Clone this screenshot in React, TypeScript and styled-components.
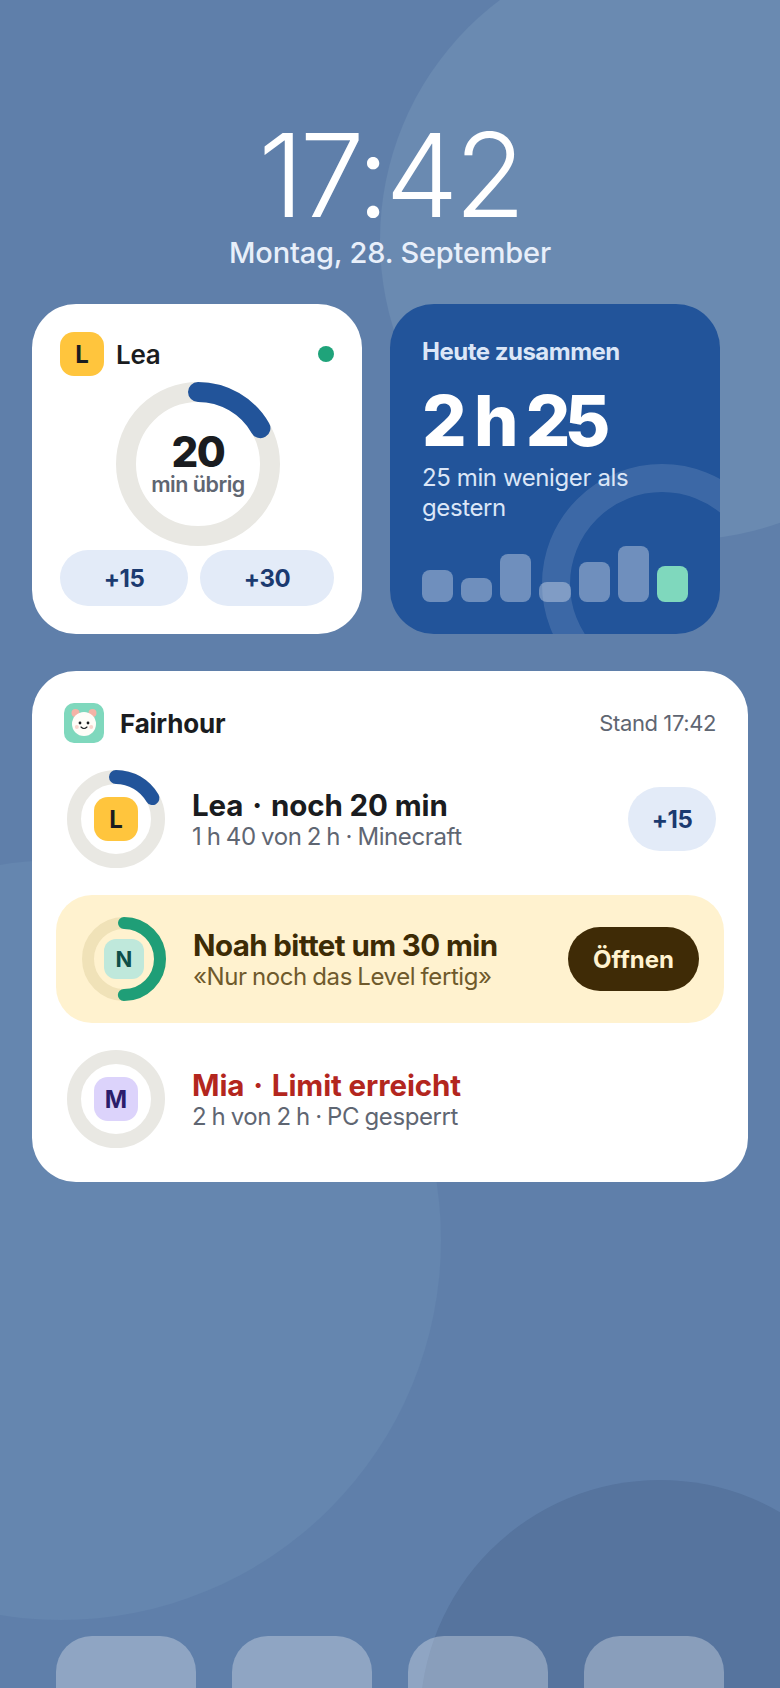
import React from "react";
import styled, { createGlobalStyle } from "styled-components";

const GlobalStyle = createGlobalStyle`
  html, body {
    margin: 0;
    padding: 0;
    background: #5f7faa;
  }
  * {
    box-sizing: border-box;
  }
`;

const Screen = styled.div`
  position: relative;
  width: 780px;
  height: 1688px;
  overflow: hidden;
  background: #5f7faa;
  font-family: Inter, "Liberation Sans", sans-serif;
  color: #1a1c20;
  display: flex;
  flex-direction: column;
`;
const Blob = styled.div<{ $x: number; $y: number; $size: number; $color: string }>`
  position: absolute;
  left: ${(p) => p.$x}px;
  top: ${(p) => p.$y}px;
  width: ${(p) => p.$size}px;
  height: ${(p) => p.$size}px;
  border-radius: 50%;
  background: ${(p) => p.$color};
`;
const Content = styled.div`
  position: relative;
  flex: 1;
  display: flex;
  flex-direction: column;
  padding: 0 32px;
`;
const Clock = styled.div`
  text-align: center;
  margin-top: 117px;
  font-size: 116px;
  line-height: 116px;
  font-weight: 300;
  letter-spacing: -4px;
  color: #fff;
`;
const DateLine = styled.div`
  text-align: center;
  margin-top: 2px;
  font-size: 29px;
  line-height: 36px;
  font-weight: 500;
  letter-spacing: -0.2px;
  color: #e8effa;
`;
const WidgetRow = styled.div`
  display: flex;
  gap: 28px;
  margin-top: 33px;
`;
const Widget = styled.div<{ $dark?: boolean }>`
  position: relative;
  overflow: hidden;
  width: 330px;
  height: 330px;
  border-radius: 44px;
  display: flex;
  flex-direction: column;
  background: ${(p) => (p.$dark ? "#22549a" : "#fff")};
  padding: ${(p) => (p.$dark ? "32px" : "28px")};
`;
const WidgetHead = styled.div`
  display: flex;
  align-items: center;
  gap: 12px;
`;
const Avatar = styled.div<{ $bg: string; $fg: string; $size: number; $radius: number; $font: number }>`
  position: relative;
  flex: none;
  width: ${(p) => p.$size}px;
  height: ${(p) => p.$size}px;
  border-radius: ${(p) => p.$radius}px;
  background: ${(p) => p.$bg};
  color: ${(p) => p.$fg};
  font-size: ${(p) => p.$font}px;
  font-weight: 700;
  display: flex;
  align-items: center;
  justify-content: center;
`;
const HeadName = styled.div`
  flex: 1;
  font-size: 26px;
  font-weight: 600;
  letter-spacing: -0.3px;
`;
const Dot = styled.div`
  width: 16px;
  height: 16px;
  border-radius: 50%;
  background: #1fa37a;
`;
const RingBox = styled.div<{ $size: number }>`
  position: relative;
  flex: none;
  width: ${(p) => p.$size}px;
  height: ${(p) => p.$size}px;
  display: flex;
  align-items: center;
  justify-content: center;
`;
const RingSvg = styled.svg`
  position: absolute;
  inset: 0;
`;
const BigRing = styled(RingBox)`
  margin: 6px 0 4px 56px;
  flex-direction: column;
`;
const RingNumber = styled.div`
  position: relative;
  font-size: 42px;
  line-height: 40px;
  font-weight: 800;
  letter-spacing: -1.5px;
`;
const RingLabel = styled.div`
  position: relative;
  font-size: 21.5px;
  line-height: 24px;
  font-weight: 600;
  letter-spacing: -0.5px;
  color: #5f6672;
`;
const PillRow = styled.div`
  display: flex;
  gap: 12px;
`;
const Pill = styled.div<{ $grow?: number }>`
  flex: ${(p) => p.$grow ?? 1};
  height: 56px;
  border-radius: 28px;
  background: #e3ebf8;
  color: #1b3a70;
  font-size: 24px;
  font-weight: 700;
  letter-spacing: -0.5px;
  display: flex;
  align-items: center;
  justify-content: center;
`;
const Decor = styled.div`
  position: absolute;
  left: 152px;
  top: 160px;
  width: 240px;
  height: 240px;
  border-radius: 50%;
  border: 28px solid rgba(255, 255, 255, 0.12);
`;
const DarkLabel = styled.div`
  position: relative;
  font-size: 24px;
  line-height: 32px;
  font-weight: 700;
  letter-spacing: -0.5px;
  color: #dbe6f7;
`;
const DarkValue = styled.div`
  position: relative;
  margin-top: 15px;
  font-size: 70px;
  line-height: 76px;
  font-weight: 800;
  letter-spacing: -5.5px;
  word-spacing: 3px;
  color: #fff;
`;
const DarkNote = styled.div`
  position: relative;
  margin-top: 4px;
  width: 230px;
  font-size: 24px;
  line-height: 30px;
  letter-spacing: -0.4px;
  color: #dbe6f7;
`;
const Bars = styled.div`
  position: relative;
  margin-top: auto;
  display: flex;
  align-items: flex-end;
  gap: 8px;
`;
const Bar = styled.div<{ $h: number; $accent?: boolean }>`
  flex: 1;
  height: ${(p) => p.$h}px;
  border-radius: 8px;
  background: ${(p) => (p.$accent ? "#7fd8bd" : "rgba(255, 255, 255, 0.35)")};
`;
const Card = styled.div`
  margin-top: 37px;
  background: #fff;
  border-radius: 44px;
  padding: 32px 24px 34px;
  display: flex;
  flex-direction: column;
  gap: 27px;
`;
const CardHead = styled.div`
  display: flex;
  align-items: center;
  padding: 0 8px;
`;
const AppName = styled.div`
  flex: 1;
  margin-left: 16px;
  font-size: 26px;
  font-weight: 700;
  letter-spacing: -0.2px;
`;
const Stamp = styled.div`
  font-size: 22px;
  color: #5f6672;
  letter-spacing: -0.4px;
`;
const Row = styled.div<{ $highlight?: boolean }>`
  display: flex;
  align-items: center;
  ${(p) =>
    p.$highlight
      ? `
    height: 128px;
    padding: 0 25px 0 26px;
    gap: 27px;
    border-radius: 36px;
    background: #fff2cf;
  `
      : `
    padding: 0 8px 0 11px;
    gap: 27px;
  `}
`;
const RowText = styled.div`
  flex: 1;
  min-width: 0;
  padding-top: 2px;
`;
const RowTitle = styled.div<{ $color?: string; $tight?: boolean }>`
  font-size: 29.5px;
  line-height: 34px;
  font-weight: 700;
  letter-spacing: ${(p) => (p.$tight ? "-0.6px" : "-0.1px")};
  color: ${(p) => p.$color ?? "#1a1c20"};
`;
const TitleSep = styled.span`
  margin: 0 2px;
`;
const RowSub = styled.div<{ $color?: string }>`
  font-size: 24px;
  line-height: 30px;
  letter-spacing: -0.4px;
  word-spacing: -1px;
  color: ${(p) => p.$color ?? "#5f6672"};
`;
const SmallPill = styled(Pill)`
  flex: none;
  width: 88px;
  height: 64px;
  border-radius: 32px;
`;
const OpenButton = styled.div`
  flex: none;
  width: 131px;
  height: 64px;
  border-radius: 32px;
  background: #3f2b06;
  color: #fff3d0;
  font-size: 24px;
  font-weight: 700;
  display: flex;
  align-items: center;
  justify-content: center;
`;
const Dock = styled.div`
  position: relative;
  display: flex;
  justify-content: center;
  gap: 36px;
  margin-top: auto;
`;
const DockTile = styled.div`
  width: 140px;
  height: 52px;
  border-radius: 36px 36px 0 0;
  background: rgba(255, 255, 255, 0.3);
`;

type RingProps = {
  size: number;
  stroke: number;
  value: number;
  track: string;
  color?: string;
};

// progress ring, starts at 12 o'clock
const Ring = ({ size, stroke, value, track, color }: RingProps) => {
  const r = (size - stroke) / 2;
  const c = 2 * Math.PI * r;
  return (
    <RingSvg width={size} height={size} viewBox={`0 0 ${size} ${size}`}>
      <circle cx={size / 2} cy={size / 2} r={r} fill="none" stroke={track} strokeWidth={stroke} />
      {value > 0 && (
        <circle
          cx={size / 2}
          cy={size / 2}
          r={r}
          fill="none"
          stroke={color}
          strokeWidth={stroke}
          strokeLinecap="round"
          strokeDasharray={`${c * value} ${c}`}
          transform={`rotate(-90 ${size / 2} ${size / 2})`}
        />
      )}
    </RingSvg>
  );
};

const AppIcon = () => (
  <svg width="40" height="40" viewBox="0 0 40 40">
    <rect width="40" height="40" rx="10" fill="#7fd8bd" />
    <circle cx="11.5" cy="10" r="4" fill="#f4b3a6" />
    <circle cx="28.5" cy="10" r="4" fill="#f4b3a6" />
    <circle cx="20" cy="21" r="12" fill="#fffdf8" />
    <circle cx="16" cy="20" r="1.4" fill="#1a1c20" />
    <circle cx="24" cy="20" r="1.4" fill="#1a1c20" />
    <circle cx="12.8" cy="24" r="2" fill="#f9d5cd" />
    <circle cx="27.2" cy="24" r="2" fill="#f9d5cd" />
    <path d="M17 24 Q20 27 23 24" fill="none" stroke="#1a1c20" strokeWidth="1.1" strokeLinecap="round" />
  </svg>
);

const barHeights = [32, 24, 48, 20, 40, 56];

export default function App() {
  return (
    <>
      <GlobalStyle />
      <Screen>
        <Blob $x={380} $y={-60} $size={600} $color="#6a8ab1" />
        <Blob $x={-319} $y={860} $size={760} $color="#6586af" />
        <Blob $x={420} $y={1480} $size={480} $color="#56749e" />
        <Content>
          <Clock>17:42</Clock>
          <DateLine>Montag, 28. September</DateLine>
          <WidgetRow>
            <Widget>
              <WidgetHead>
                <Avatar $bg="#ffc53d" $fg="#1a1c20" $size={44} $radius={14} $font={24}>
                  L
                </Avatar>
                <HeadName>Lea</HeadName>
                <Dot />
              </WidgetHead>
              <BigRing $size={164}>
                <Ring size={164} stroke={20} value={1 / 6} track="#e9e8e3" color="#22549a" />
                <RingNumber>20</RingNumber>
                <RingLabel>min übrig</RingLabel>
              </BigRing>
              <PillRow>
                <Pill $grow={128}>+15</Pill>
                <Pill $grow={134}>+30</Pill>
              </PillRow>
            </Widget>
            <Widget $dark>
              <Decor />
              <DarkLabel>Heute zusammen</DarkLabel>
              <DarkValue>2 h 25</DarkValue>
              <DarkNote>25 min weniger als gestern</DarkNote>
              <Bars>
                {barHeights.map((h, i) => (
                  <Bar key={i} $h={h} />
                ))}
                <Bar $h={36} $accent />
              </Bars>
            </Widget>
          </WidgetRow>
          <Card>
            <CardHead>
              <AppIcon />
              <AppName>Fairhour</AppName>
              <Stamp>Stand 17:42</Stamp>
            </CardHead>
            <Row>
              <RingBox $size={98}>
                <Ring size={98} stroke={14} value={1 / 6} track="#e9e8e3" color="#22549a" />
                <Avatar $bg="#ffc53d" $fg="#1a1c20" $size={44} $radius={14} $font={24}>
                  L
                </Avatar>
              </RingBox>
              <RowText>
                <RowTitle>
                  Lea<TitleSep> · </TitleSep>noch 20 min
                </RowTitle>
                <RowSub>1 h 40 von 2 h · Minecraft</RowSub>
              </RowText>
              <SmallPill>+15</SmallPill>
            </Row>
            <Row $highlight>
              <RingBox $size={84}>
                <Ring size={84} stroke={12} value={0.5} track="#f0e2b8" color="#1f9e77" />
                <Avatar $bg="#bfe8db" $fg="#0e4f48" $size={40} $radius={12} $font={22}>
                  N
                </Avatar>
              </RingBox>
              <RowText>
                <RowTitle $color="#3d2b05" $tight>
                  Noah bittet um 30 min
                </RowTitle>
                <RowSub $color="#6f5a2c">«Nur noch das Level fertig»</RowSub>
              </RowText>
              <OpenButton>Öffnen</OpenButton>
            </Row>
            <Row>
              <RingBox $size={98}>
                <Ring size={98} stroke={14} value={0} track="#e9e8e3" />
                <Avatar $bg="#dcd3fb" $fg="#2b1d6b" $size={44} $radius={14} $font={24}>
                  M
                </Avatar>
              </RingBox>
              <RowText>
                <RowTitle $color="#b3261e">
                  Mia<TitleSep> · </TitleSep>Limit erreicht
                </RowTitle>
                <RowSub>2 h von 2 h · PC gesperrt</RowSub>
              </RowText>
            </Row>
          </Card>
          <Dock>
            <DockTile />
            <DockTile />
            <DockTile />
            <DockTile />
          </Dock>
        </Content>
      </Screen>
    </>
  );
}
